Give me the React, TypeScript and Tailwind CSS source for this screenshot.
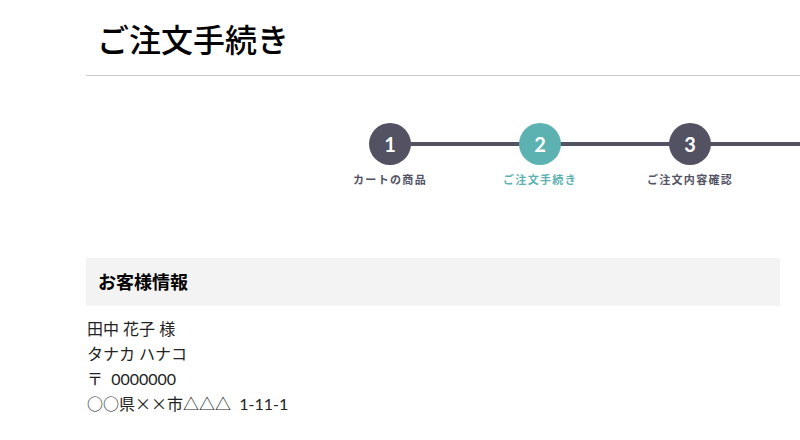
const steps = [
  { no: 1, label: "カートの商品", active: false },
  { no: 2, label: "ご注文手続き", active: true },
  { no: 3, label: "ご注文内容確認", active: false },
];

const cjk = { fontFamily: '"Noto Sans CJK JP", sans-serif' };

function Stepper() {
  return (
    <div className="flex ml-[229px]">
      {steps.map((s) => (
        <div key={s.no} className="relative w-[150px] shrink-0 flex flex-col items-center">
          {/* connector to next step (runs on past the viewport edge) */}
          <div className="absolute top-[19px] left-1/2 w-[160px] h-[4px] bg-[#525263]" />
          <div
            className={`relative z-10 w-[42px] h-[42px] rounded-full flex items-center justify-center text-white text-[20px] font-bold ${
              s.active ? "bg-[#5cb1b1]" : "bg-[#525263]"
            }`}
          >
            {s.no}
          </div>
          <p
            className={`mt-[7px] text-[11px] leading-[16px] font-bold tracking-[0.12em] whitespace-nowrap ${
              s.active ? "text-[#5cb1b1]" : "text-[#525263]"
            }`}
          >
            {s.label}
          </p>
        </div>
      ))}
    </div>
  );
}

export default function App() {
  return (
    <div
      className="w-[800px] h-[440px] overflow-hidden bg-white pl-[86px] text-[#222]"
      style={{ fontFamily: 'Lato, "Noto Sans CJK JP", sans-serif' }}
    >
      {/* Header */}
      <div className="h-[76px] border-b border-[#cccccc] flex items-center pl-[11px] pt-[4px]">
        <h1 className="text-[32px] font-medium text-black leading-none">ご注文手続き</h1>
      </div>

      {/* Steps */}
      <div className="pt-[47px] overflow-hidden">
        <Stepper />
      </div>

      {/* Customer info */}
      <div className="pr-[20px] mt-[70px]">
        <div className="h-[48px] bg-[#f3f3f3] flex items-center pl-[12px]">
          <h2 className="text-[18px] font-bold text-black">お客様情報</h2>
        </div>
        <div className="mt-[10px] text-[16px] leading-[25px] pl-px">
          <p>田中 花子 様</p>
          <p>タナカ ハナコ</p>
          <p>〒&nbsp; 0000000</p>
          <p>
            <span style={cjk}>○○</span>県<span style={cjk}>××</span>市<span style={cjk}>△△△</span>&nbsp; 1-11-1
          </p>
        </div>
      </div>
    </div>
  );
}
